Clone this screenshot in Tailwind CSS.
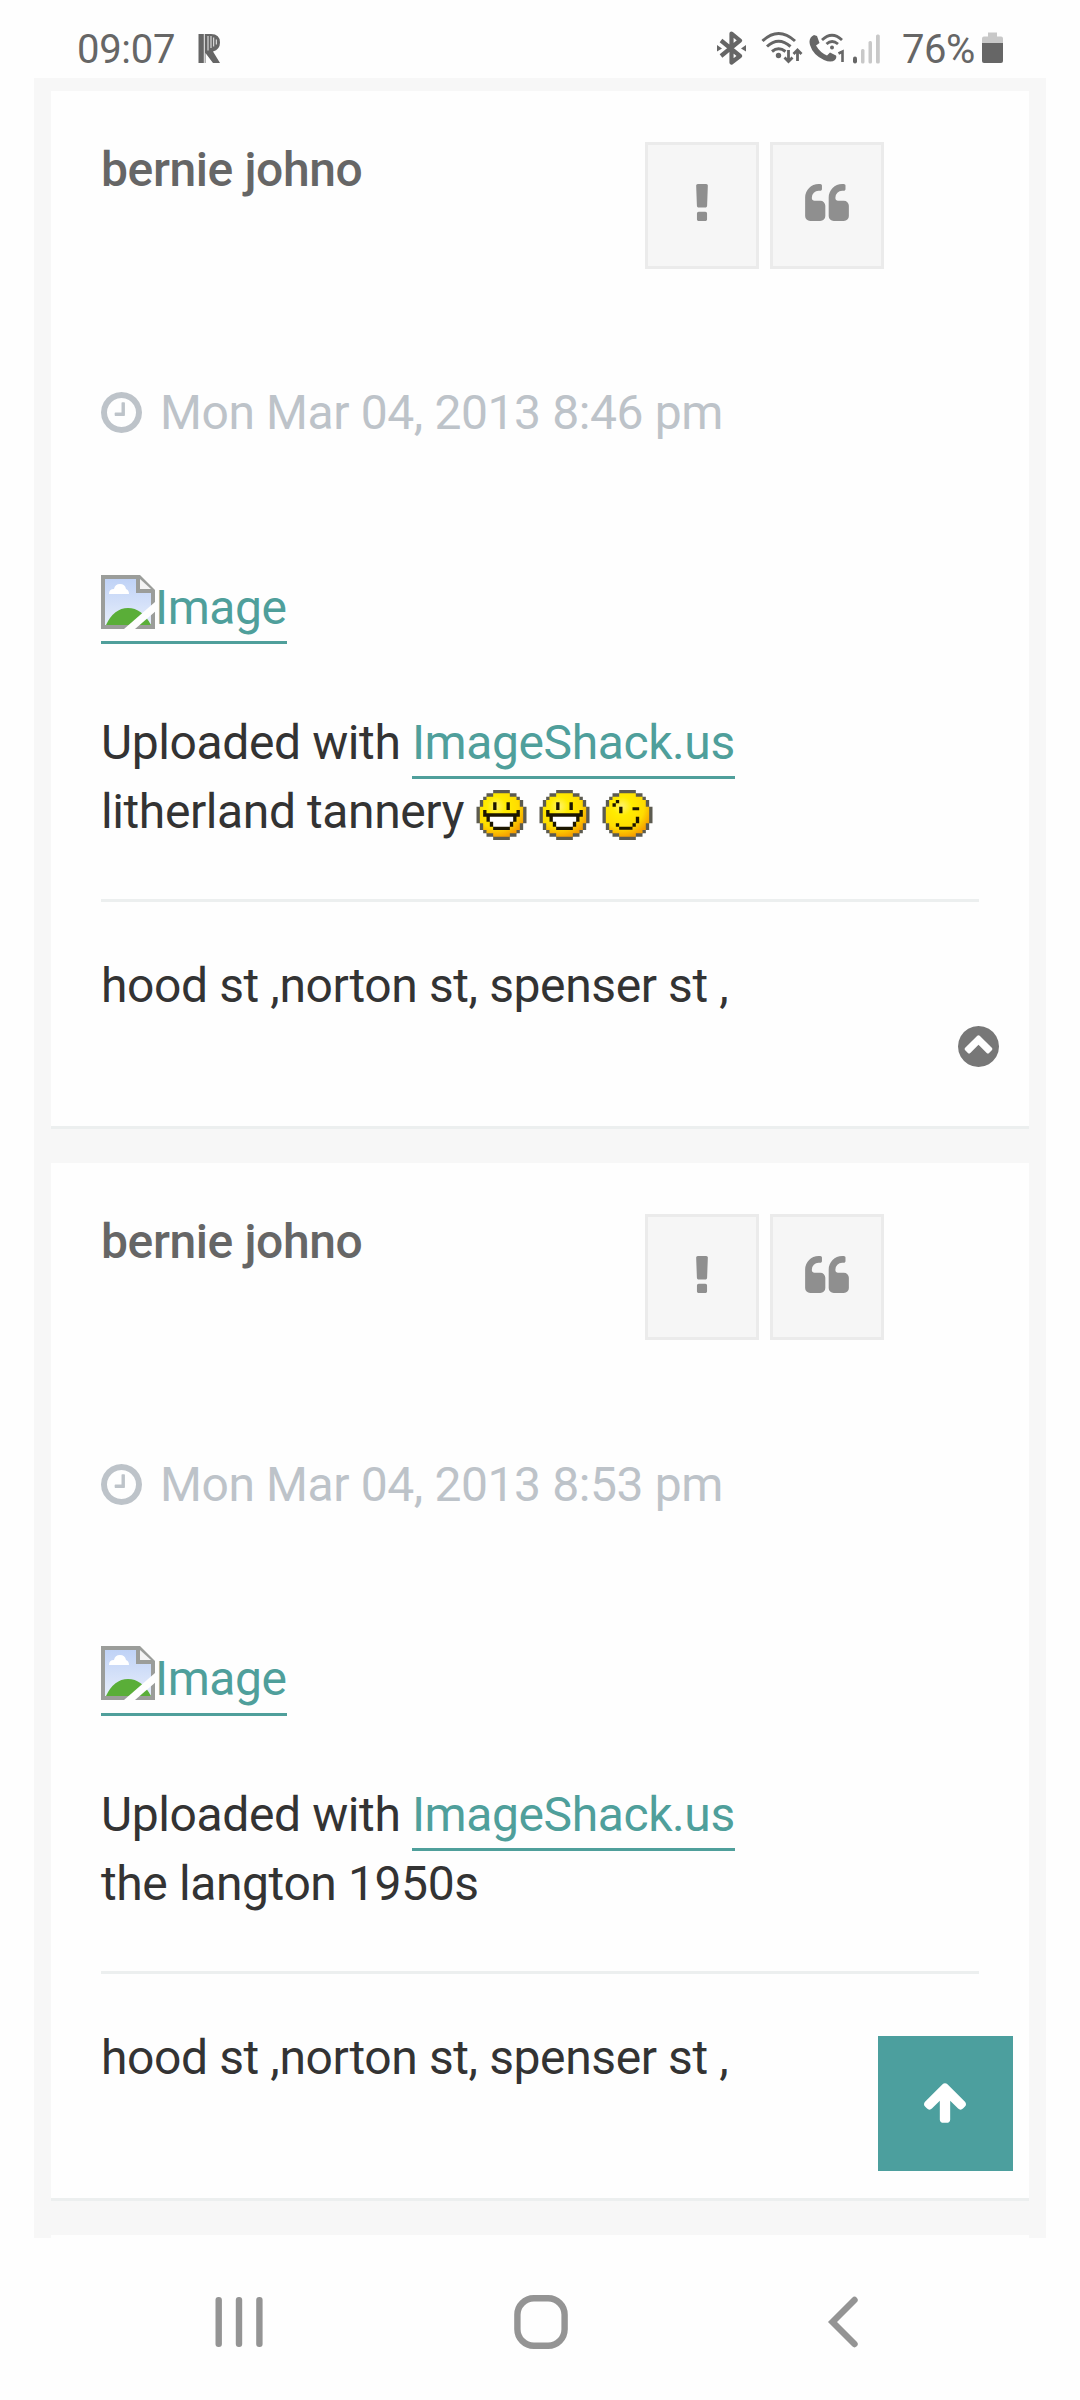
<!DOCTYPE html>
<html lang="en">
<head>
  <meta charset="UTF-8" />
  <meta name="viewport" content="width=device-width, initial-scale=1.0"/>
  <title>Forum topic</title>
  <script src="https://cdn.jsdelivr.net/npm/@tailwindcss/browser@4"></script>
</head>
<body class="bg-[#fefefe] font-['Roboto',sans-serif]">

  <!-- Shared icons -->
  <svg class="absolute w-0 h-0">
    <defs>
      <radialGradient id="face" cx="0.38" cy="0.3" r="0.72">
        <stop offset="0" stop-color="#fff36a"/>
        <stop offset="0.3" stop-color="#ffec00"/>
        <stop offset="0.7" stop-color="#ffdc00"/>
        <stop offset="1" stop-color="#f5a000"/>
      </radialGradient>
      <linearGradient id="sky" x1="0" y1="0" x2="0" y2="1">
        <stop offset="0" stop-color="#bfd2f6"/>
        <stop offset="1" stop-color="#e6edfb"/>
      </linearGradient>
    </defs>
    <symbol id="exclamation" viewBox="674 128 444 1408">
      <path d="M1088 1248v224q0 26-19 45t-45 19h-256q-26 0-45-19t-19-45v-224q0-26 19-45t45-19h256q26 0 45 19t19 45zm30-1056l-28 768q-1 26-20.500 45t-45.500 19h-256q-26 0-45.500-19t-20.500-45l-28-768q-1-26 17.500-45t44.500-19h320q26 0 44.500 19t17.500 45z"/>
    </symbol>
    <symbol id="quote" viewBox="64 128 1664 1408">
      <path d="M832 960v384q0 80-56 136t-136 56h-384q-80 0-136-56t-56-136v-704q0-104 40.500-198.500t109.500-163.500 163.500-109.500 198.500-40.500h64q26 0 45 19t19 45v128q0 26-19 45t-45 19h-64q-106 0-181 75t-75 181v32q0 40 28 68t68 28h224q80 0 136 56t56 136zm896 0v384q0 80-56 136t-136 56h-384q-80 0-136-56t-56-136v-704q0-104 40.500-198.500t109.500-163.500 163.500-109.500 198.500-40.500h64q26 0 45 19t19 45v128q0 26-19 45t-45 19h-64q-106 0-181 75t-75 181v32q0 40 28 68t68 28h224q80 0 136 56t56 136z"/>
    </symbol>
    <symbol id="clock" viewBox="128 128 1536 1536">
      <path d="M1024 544v448q0 14-9 23t-23 9h-320q-14 0-23-9t-9-23v-64q0-14 9-23t23-9h224v-352q0-14 9-23t23-9h64q14 0 23 9t9 23zm416 352q0-148-73-273t-198-198-273-73-273 73-198 198-73 273 73 273 198 198 273 73 273-73 198-198 73-273zm224 0q0 209-103 385.500t-279.500 279.500-385.500 103-385.500-103-279.500-279.500-103-385.500 103-385.500 279.500-279.500 385.500-103 385.500 103 279.500 279.500 103 385.500z"/>
    </symbol>
    <symbol id="broken" viewBox="0 0 54 54">
      <path d="M0 0H39L54 15V54H0z" fill="#9b9d9a"/>
      <path d="M4 4H35V18H50V50H4z" fill="url(#sky)"/>
      <path d="M39 4L50 14H39z" fill="#f4f4f4"/>
      <path d="M8 19q0-5 5-5q1-5 6-5q5 0 6 5q3 1 3 5z" fill="#fff"/>
      <path d="M5 50Q13 33 27 33Q41 33 50 50z" fill="#5aae38"/>
      <path d="M55 26L23 54H34L55 36z" fill="#fefefe"/>
    </symbol>
    <symbol id="grin" viewBox="0 0 15 15">
      <path d="M5 0h5v1h2v1h1v1h1v2h1v5h-1v2h-1v1h-1v1h-2v1h-5v-1h-2v-1h-1v-1h-1v-2h-1v-5h1v-2h1v-1h1v-1h2z" fill="#5c5b50"/>
      <path d="M5 1h5v1h2v1h1v2h1v5h-1v2h-1v1h-2v1h-5v-1h-2v-1h-1v-2h-1v-5h1v-2h1v-1h2z" fill="url(#face)"/>
      <path d="M5 3.700h1v2.300h-1zM9 3.700h1v2.300h-1zM2 6h1v1h9v-1h1v2h-1v1.500h-1v1.500h-1v1h-5v-1h-1v-1.500h-1v-1.500h-1z" fill="#1c1600"/>
      <path d="M4 8h7v1.500h-1v1.500h-5v-1.500h-1z" fill="#fff"/>
    </symbol>
    <symbol id="wink" viewBox="0 0 15 15">
      <path d="M5 0h5v1h2v1h1v1h1v2h1v5h-1v2h-1v1h-1v1h-2v1h-5v-1h-2v-1h-1v-1h-1v-2h-1v-5h1v-2h1v-1h1v-1h2z" fill="#5c5b50"/>
      <path d="M5 1h5v1h2v1h1v2h1v5h-1v2h-1v1h-2v1h-5v-1h-2v-1h-1v-2h-1v-5h1v-2h1v-1h2z" fill="url(#face)"/>
      <path d="M3 4h1v1h-1zM4 3h1v1h-1zM5 5h1v2h-1zM9 5.200h2v0.900h-2zM4 10h1v1h-1zM5 11h4v0.900h-4zM9 10h1v1h-1zM10 8h1v2h-1z" fill="#1c1600"/>
    </symbol>
  </svg>

  <!-- Status bar -->
  <header class="h-[78px] pl-[77px] pr-[77px] pt-[31px] flex items-start text-[#666] fill-[#666]">
    <span class="w-[97px] pt-[1px] text-[40px] leading-[36px] tracking-[-0.3px] whitespace-nowrap">09:07</span>
    <svg class="ml-[24px] mt-[2px] w-[23px] h-[31px]" viewBox="0 0 23 31">
      <path d="M0.500 1H13Q22 1 22 9.500Q22 16.500 15 18.500L22 30H15L7.500 20V30H0.500z"/>
      <path d="M6.300 1V30M10 3V17.500M13 3V15M15.700 4.500V13.500M18.300 6.500V11.500" fill="none" stroke="#fefefe" stroke-width="0.900"/>
    </svg>

    <svg class="ml-auto w-[29px] h-[34px]" viewBox="0 0 29 34">
      <path d="M4 9.500L23 25L14.500 31.500V2.500L23 9.500L4 25" fill="none" stroke="#666" stroke-width="4.200" stroke-linejoin="round"/>
      <path d="M0 14l5 3.500-5 3zM29 14l-5 3.500 5 3z"/>
    </svg>
    <svg class="ml-[15px] w-[42px] h-[34px]" viewBox="0 0 42 34">
      <g fill="none" stroke="#666" stroke-width="3">
        <path d="M1.500 10Q17.500-5 34 10" />
        <path d="M6 15.500Q17.500 5 29.500 15.500"/>
        <path d="M11 20.500Q17.500 15 24.500 20.500"/>
        <path d="M27.500 19v11M23.500 26.500l4 4 4-4M36.500 30V20M32.500 23l4-4 4 4" stroke-width="2.800"/>
      </g>
      <circle cx="17.500" cy="24.500" r="2.700"/>
    </svg>
    <svg class="ml-[6px] w-[36px] h-[34px]" viewBox="0 0 36 34">
      <path d="M5 4L8 5L10.500 12L7 14.500Q11 21.500 18 24.500L21 21.500L27 24.500Q28 27 26 29Q22 32 15 29Q4 24 1 14Q-1 7 5 4z"/>
      <g fill="none" stroke="#666" stroke-width="2.800">
        <path d="M13 9Q23-0.500 33 9"/>
        <path d="M17.500 13Q23 8 29 13"/>
      </g>
      <circle cx="23" cy="16.500" r="2"/>
      <path d="M29.500 22.500L33.500 20.500V31" fill="none" stroke="#666" stroke-width="2.600"/>
    </svg>
    <svg class="ml-[7px] w-[30px] h-[34px]" viewBox="0 0 30 34">
      <rect x="1" y="25.500" width="4" height="7" rx="2"/>
      <g fill="#c8c8c8">
        <rect x="9" y="18" width="3.500" height="14.500" rx="1.500"/>
        <rect x="16.500" y="10" width="3.500" height="22.500" rx="1.500"/>
        <rect x="24" y="3.500" width="3.800" height="29" rx="1.500"/>
      </g>
    </svg>
    <span class="ml-[20px] w-[80px] pt-[1px] text-[40px] leading-[36px] tracking-[-0.5px] whitespace-nowrap">76%</span>
    <svg class="w-[21px] h-[34px]" viewBox="0 0 21 34">
      <path d="M6 1.500h9v4h4q2 0 2 2v5h-21v-5q0-2 2-2h4z" fill="#c8c8c8"/>
      <path d="M0 12h21v18q0 2-2 2h-17q-2 0-2-2z"/>
    </svg>
  </header>

  <!-- Topic -->
  <main class="mx-[34px] h-[2160px] px-[17px] pt-[13px] bg-[#f7f7f7] text-[48px] leading-[69px] tracking-[-0.4px] text-[#333] overflow-hidden">

    <article class="h-[1038px] mb-[34px] px-[50px] bg-[#fefefe] border-b-[3px] border-[#ecefef] flex flex-col">
      <div class="h-[287px] flex justify-between">
        <h3 class="pt-[44px] font-medium text-[#666]">bernie johno</h3>
        <div class="pt-[51px] mr-[95px] flex gap-[11px]">
          <button class="w-[114px] h-[127px] pb-[7px] bg-[#f6f6f6] border-[3px] border-[#ebebeb] flex items-center justify-center">
            <svg class="w-[12px] h-[37px] fill-[#8f8f8f]"><use href="#exclamation"/></svg>
          </button>
          <button class="w-[114px] h-[127px] pb-[7px] bg-[#f6f6f6] border-[3px] border-[#ebebeb] flex items-center justify-center">
            <svg class="w-[44px] h-[37px] fill-[#8f8f8f]"><use href="#quote"/></svg>
          </button>
        </div>
      </div>
      <p class="flex items-center text-[#bdc3c9]">
        <svg class="w-[41px] h-[41px] mr-[18px] fill-[#bdc3c9]"><use href="#clock"/></svg>Mon Mar 04, 2013 8:46 pm
      </p>
      <div class="mt-[126px]">
        <a class="w-[186px] h-[71px] border-b-[3px] border-[#4f9f9b] text-[#4f9f9b] flex"><svg class="w-[54px] h-[54px] mt-[2px] shrink-0"><use href="#broken"/></svg>Image</a>
      </div>
      <div class="mt-[64px]">
        <p class="h-[69px]">Uploaded with <a class="inline-block h-[71px] border-b-[3px] border-[#4f9f9b] text-[#4f9f9b]">ImageShack.us</a></p>
        <p class="h-[69px] flex">litherland tannery
          <span class="pl-[12px] pt-[13px] flex gap-[12px]">
            <svg class="w-[51px] h-[50px]"><use href="#grin"/></svg>
            <svg class="w-[51px] h-[50px]"><use href="#grin"/></svg>
            <svg class="w-[51px] h-[50px]"><use href="#wink"/></svg>
          </span>
        </p>
      </div>
      <div class="mt-[53px] pt-[49px] border-t-[3px] border-[#ecefef]">hood st ,norton st, spenser st ,</div>
      <a class="mt-[6px] -mr-[20px] self-end"><svg class="w-[41px] h-[41px] fill-[#777]" viewBox="128 128 1536 1536"><path d="M1293 1139l102-102q19-19 19-45t-19-45l-454-454q-19-19-45-19t-45 19l-454 454q-19 19-19 45t19 45l102 102q19 19 45 19t45-19l307-307 307 307q19 19 45 19t45-19zm371-243q0 209-103 385.500t-279.500 279.500-385.500 103-385.500-103-279.500-279.500-103-385.500 103-385.500 279.500-279.500 385.500-103 385.500 103 279.500 279.500 103 385.500z"/></svg></a>
    </article>

    <article class="h-[1038px] mb-[34px] px-[50px] bg-[#fefefe] border-b-[3px] border-[#ecefef] flex flex-col">
      <div class="h-[287px] flex justify-between">
        <h3 class="pt-[44px] font-medium text-[#666]">bernie johno</h3>
        <div class="pt-[51px] mr-[95px] flex gap-[11px]">
          <button class="w-[114px] h-[126px] pb-[6px] bg-[#f6f6f6] border-[3px] border-[#ebebeb] flex items-center justify-center">
            <svg class="w-[12px] h-[37px] fill-[#8f8f8f]"><use href="#exclamation"/></svg>
          </button>
          <button class="w-[114px] h-[126px] pb-[6px] bg-[#f6f6f6] border-[3px] border-[#ebebeb] flex items-center justify-center">
            <svg class="w-[44px] h-[37px] fill-[#8f8f8f]"><use href="#quote"/></svg>
          </button>
        </div>
      </div>
      <p class="flex items-center text-[#bdc3c9]">
        <svg class="w-[41px] h-[41px] mr-[18px] fill-[#bdc3c9]"><use href="#clock"/></svg>Mon Mar 04, 2013 8:53 pm
      </p>
      <div class="mt-[125px]">
        <a class="w-[186px] h-[72px] border-b-[3px] border-[#4f9f9b] text-[#4f9f9b] flex"><svg class="w-[54px] h-[54px] mt-[2px] shrink-0"><use href="#broken"/></svg>Image</a>
      </div>
      <div class="mt-[64px]">
        <p class="h-[69px]">Uploaded with <a class="inline-block h-[71px] border-b-[3px] border-[#4f9f9b] text-[#4f9f9b]">ImageShack.us</a></p>
        <p class="h-[69px]">the langton 1950s</p>
      </div>
      <div class="mt-[53px] pt-[49px] border-t-[3px] border-[#ecefef]">hood st ,norton st, spenser st ,</div>
    </article>

    <article class="h-[60px] bg-[#fefefe]"></article>
  </main>

  <!-- Back to top -->
  <a class="fixed left-[878px] top-[2036px] w-[135px] h-[135px] pb-[2px] pr-[1px] bg-[#4c9f9e] flex items-center justify-center">
    <svg class="w-[42px] h-[40px] fill-white" viewBox="117 192 1558 1472"><path d="M1675 971q0 51-37 90l-75 75q-38 38-91 38-54 0-90-38l-294-293v704q0 52-37.500 84.500t-90.500 32.500h-128q-53 0-90.500-32.500t-37.500-84.500v-704l-294 293q-36 38-90 38t-90-38l-75-75q-38-38-38-90 0-53 38-91l651-651q35-37 90-37 54 0 91 37l651 651q37 39 37 91z"/></svg>
  </a>

  <!-- Navigation bar -->
  <nav class="h-[162px] pl-[215px] pt-[56px] flex">
    <svg class="w-[48px] h-[56px]" viewBox="0 0 48 56" fill="#949494">
      <rect x="0.500" y="3" width="6.400" height="50" rx="3"/>
      <rect x="20.800" y="3" width="6.400" height="50" rx="3"/>
      <rect x="41.200" y="3" width="6.400" height="50" rx="3"/>
    </svg>
    <svg class="ml-[250px] w-[56px] h-[56px]" viewBox="0 0 56 56">
      <rect x="4.400" y="4.300" width="47.200" height="47.400" rx="16.500" fill="none" stroke="#949494" stroke-width="6.400"/>
    </svg>
    <svg class="ml-[258px] w-[32px] h-[56px]" viewBox="0 0 32 56">
      <path d="M27.500 6L5.500 28L27.500 50" fill="none" stroke="#949494" stroke-width="6.400" stroke-linecap="round"/>
    </svg>
  </nav>

</body>
</html>
